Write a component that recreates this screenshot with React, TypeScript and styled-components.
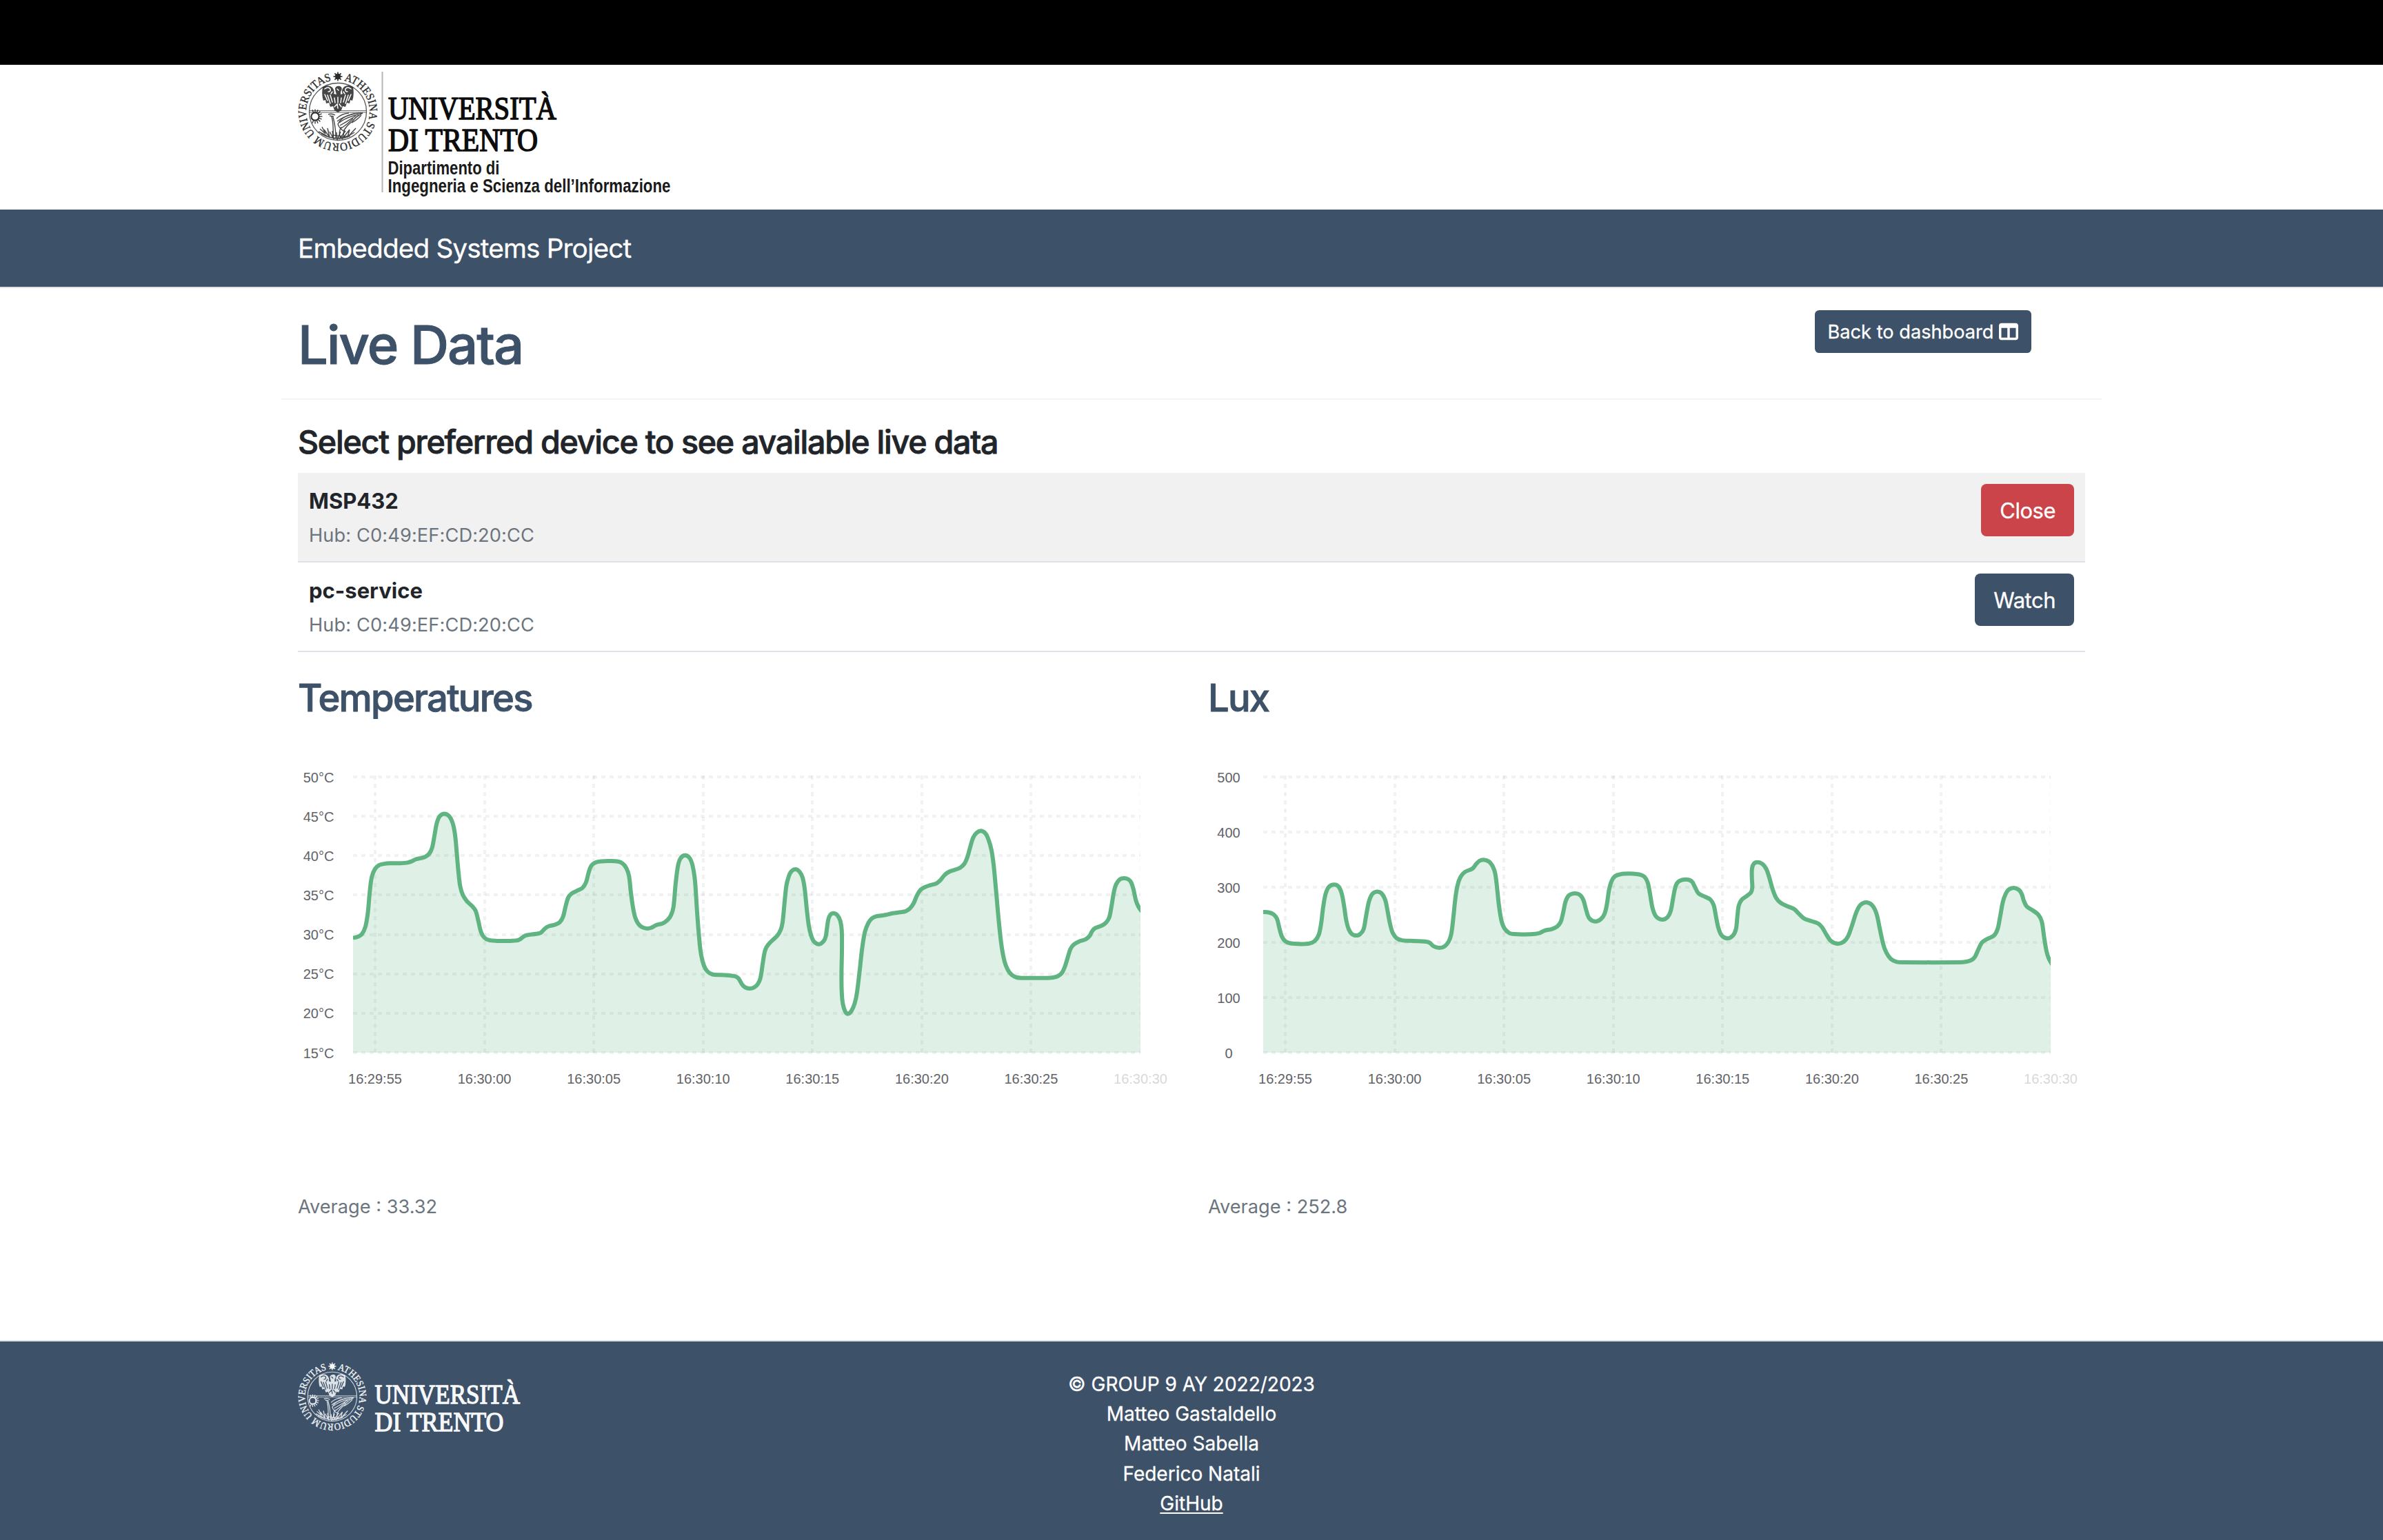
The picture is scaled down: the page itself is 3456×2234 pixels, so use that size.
import styled, { createGlobalStyle, css } from "styled-components";

const slate = "#3d5168";
const ink = "#212529";
const muted = "#6c757d";
const rule = "#dee2e6";
const green = "#5fb481";

const GlobalStyle = createGlobalStyle`
  * { box-sizing: border-box; }
  body {
    margin: 0;
    background: #fff;
    color: ${ink};
    font-family: Inter, "Noto Sans", sans-serif;
    font-size: 31px;
    line-height: 48px;
  }
  h1, h2, h3 { margin: 0; }
`;

const Page = styled.div`
  display: flex;
  flex-direction: column;
  height: 2234px;
`;

const TopStrip = styled.div`
  flex: none;
  height: 94px;
  background: #000;
`;

const Container = styled.div`
  width: 2640px;
  margin: 0 auto;
  padding: 0 24px;
`;

const Masthead = styled.header`
  flex: none;
  height: 210px;
  padding-top: 10px;
  svg { display: block; overflow: visible; }
`;

const Navbar = styled.nav`
  flex: none;
  display: flex;
  align-items: center;
  height: 114px;
  padding-top: 3px;
  background: ${slate};
  border-bottom: 2px solid ${rule};
`;

const Brand = styled.span`
  color: #fff;
  font-size: 38.8px;
  letter-spacing: -0.9px;
  -webkit-text-stroke: 0.3px #fff;
`;

const Main = styled.main`
  flex: 1;
`;

const TitleBar = styled(Container)`
  display: flex;
  justify-content: space-between;
  align-items: flex-start;
  height: 162px;
  padding: 32px 102px 0 24px;
  border-bottom: 2px solid #f3f4f7;
`;

const Title = styled.h1`
  padding-top: 2px;
  color: ${slate};
  font-size: 77.6px;
  font-weight: 500;
  line-height: 96px;
  letter-spacing: -1.95px;
  -webkit-text-stroke: 1px ${slate};
`;

const buttonTone = {
  primary: slate,
  danger: "#cb444a",
};

const Button = styled.button<{ $tone: "primary" | "danger"; $small?: boolean }>`
  display: flex;
  align-items: center;
  justify-content: center;
  border: 0;
  color: #fff;
  font-family: inherit;
  background: ${(p) => buttonTone[p.$tone]};
  ${(p) =>
    p.$small
      ? css`
          gap: 8px;
          width: 314px;
          height: 62px;
          border-radius: 6.4px;
          font-size: 27.2px;
          -webkit-text-stroke: 0.3px #fff;
        `
      : css`
          height: 76px;
          padding: 0 27px;
          border-radius: 8px;
          font-size: 31px;
          letter-spacing: -0.5px;
          -webkit-text-stroke: 0.3px #fff;
        `}
`;

const Devices = styled(Container)`
  padding-top: 32px;
`;

const DevicesHeading = styled.h2`
  margin-bottom: 16px;
  font-size: 46.6px;
  font-weight: 500;
  line-height: 58px;
  letter-spacing: -1.25px;
  -webkit-text-stroke: 0.8px ${ink};
`;

const DeviceRow = styled.div<{ $active?: boolean }>`
  display: flex;
  justify-content: space-between;
  align-items: flex-start;
  height: 130px;
  padding: 16px;
  background: ${(p) => (p.$active ? "#f1f1f1" : "#fff")};
  border-bottom: 2px solid ${rule};
`;

const DeviceName = styled.div`
  padding-top: 1px;
  font-size: 31px;
  font-weight: 700;
`;

const Small = styled.div`
  padding-top: 1px;
  color: ${muted};
  font-size: 27.2px;
  line-height: 42px;
`;

const HubLine = styled(Small)`
  margin-top: 4px;
  letter-spacing: 0.12px;
`;

const Charts = styled(Container)`
  display: grid;
  grid-template-columns: 1fr 1fr;
  column-gap: 48px;
  padding-top: 32px;
`;

const ChartTitle = styled.h3`
  color: ${slate};
  font-size: 54.3px;
  font-weight: 500;
  line-height: 68px;
  letter-spacing: -1.75px;
  -webkit-text-stroke: 0.9px ${slate};
`;

const Plot = styled.svg`
  display: block;
  margin-bottom: 83px;
  font-family: "Liberation Sans", Arial, sans-serif;
  font-size: 20px;
`;

const Footer = styled.footer`
  flex: none;
  height: 290px;
  color: #fff;
  background: ${slate};
  border-top: 2px solid ${rule};
`;

const FooterGrid = styled(Container)`
  display: grid;
  grid-template-columns: 1fr 1fr 1fr;
`;

const FooterLogo = styled.div`
  padding-top: 30px;
  svg { display: block; overflow: visible; }
`;

const Credits = styled.div`
  padding-top: 41px;
  font-size: 28px;
  line-height: 43.2px;
  text-align: center;
  -webkit-text-stroke: 0.3px #fff;
  a {
    color: inherit;
    text-decoration-thickness: 2px;
    text-underline-offset: 3px;
  }
`;

/* University seal, drawn in a 116 unit box. */
function Seal({ id, color, bg }: { id: string; color: string; bg: string }) {
  const rays = Array.from({ length: 16 }, (_, i) => (i * Math.PI) / 8);
  return (
    <g>
      <defs>
        <path id={id} d="M58 12 A46 46 0 0 1 58 104 A46 46 0 0 1 58 12" />
      </defs>
      <text
        fill={color}
        stroke={color}
        strokeWidth="0.35"
        fontFamily="'Liberation Serif', serif"
        fontSize="16.8"
      >
        <textPath href={`#${id}`} startOffset="9" textLength="270" lengthAdjust="spacingAndGlyphs">
          ATHESINA STUDIORUM UNIVERSITAS
        </textPath>
      </text>
      {[0, 1, 2, 3].map((i) => (
        <line
          key={i}
          x1="58"
          x2="58"
          y1="0.5"
          y2="13.5"
          stroke={color}
          strokeWidth="1.6"
          transform={`rotate(${i * 45} 58 7)`}
        />
      ))}
      <circle cx="58" cy="7" r="4.2" fill={color} />
      <circle cx="58" cy="58" r="41.5" fill="none" stroke={color} strokeWidth="1.3" opacity="0.8" />
      <path d="M17 56.6H99M17 59H99" stroke={color} strokeWidth="1" opacity="0.75" />
      {/* eagle */}
      <path
        d="M36 22 Q45 18 50 23 Q54 28 52 32 L56 33 Q54 27 54 24 Q56 20 61 21 Q66 23 62 29 L62 33 L65 32 Q62 27 67 22 Q73 18 80 22 Q82 34 79 42 L76 41 L75 46 L71 45 L69 51 L65 50 L63 56 L58 59 L53 56 L51 50 L47 51 L45 45 L41 46 L40 41 L37 42 Q34 34 36 22Z"
        fill={color}
        opacity="0.88"
      />
      <g stroke={bg} fill="none" strokeWidth="1.5" strokeLinecap="round">
        <path d="M39 25 Q44 21 47 25 Q48 29 44 29 M77 25 Q72 21 69 25 Q68 29 72 29" />
        <path d="M39 33 L43 42 M43 34 L47 46 M47 34 L50 44 M77 33 L73 42 M73 34 L69 46 M69 34 L66 44" />
        <path d="M53 38 L54 45 M58 37 V45 M63 38 L62 45 M53 51 L57 47 L58 53 M60 47 L63 51" />
        <path d="M50 29 L48 32 M66 29 L68 32 M57 25 L59 27" />
      </g>
      {/* sun */}
      <g stroke={color} strokeWidth="1.3">
        {rays.map((a) => (
          <line
            key={a}
            x1={25 + 6 * Math.cos(a)}
            y1={65 + 6 * Math.sin(a)}
            x2={25 + 10.5 * Math.cos(a)}
            y2={65 + 10.5 * Math.sin(a)}
            opacity={Math.cos(a) < -0.6 ? 0 : 1}
          />
        ))}
        <circle cx="25" cy="65" r="5.6" fill={bg} strokeWidth="2" />
      </g>
      {/* torch and wind-blown flame */}
      <g fill="none" stroke={color} strokeWidth="1.4" opacity="0.85">
        <path d="M44 62 Q49 60 54 63 M46 64 L52 65 M49 65 Q52 76 51 95 M51 66 Q55 80 55 96" />
        <path d="M58 76 Q66 60 94 60 Q84 65 79 72 Q72 77 66 86 Q60 82 58 76Z" />
        <path d="M60 74 Q70 66 88 62 M61 78 Q72 72 84 64 M63 82 Q72 76 80 68 M56 68 Q63 61 74 60 M57 72 Q66 65 82 61 M92 63 Q86 70 78 74" />
        <path d="M63 80 Q58 88 62 96 M68 85 Q64 90 68 95" />
      </g>
      {/* grass */}
      <g fill="none" stroke={color} strokeWidth="1.5" opacity="0.85">
        <path d="M32 83 L40 90 L35 80 M38 84 L46 95 L43 82 M46 87 L52 98 L50 86 M56 88 L57 99 L62 87 M60 98 L69 86 M64 98 L75 84 L72 95 M72 95 L84 82 M30 87 L42 93 M50 92 L66 94 M40 93 Q58 101 76 93 M34 90 Q58 104 82 88" />
      </g>
    </g>
  );
}

function Wordmark({
  x,
  color,
  rows,
  size,
}: {
  x: number;
  color: string;
  size: number;
  rows: { label: string; y: number; width: number }[];
}) {
  return (
    <g
      fill={color}
      stroke={color}
      strokeWidth={size / 30}
      fontFamily="'Liberation Serif', serif"
      fontSize={size}
    >
      {rows.map((r) => (
        <text key={r.label} x={x} y={r.y} textLength={r.width} lengthAdjust="spacingAndGlyphs">
          {r.label}
        </text>
      ))}
    </g>
  );
}

function DepartmentLogo() {
  return (
    <svg width="600" height="200" viewBox="0 0 600 200">
      <Seal id="seal-dark" color="#2b2b2b" bg="#fff" />
      <rect x="121.5" y="0" width="2" height="175" fill="#b5b5b5" />
      <Wordmark
        x={131}
        color="#0c0c0c"
        size={47}
        rows={[
          { label: "UNIVERSITÀ", y: 69.3, width: 244 },
          { label: "DI TRENTO", y: 115, width: 217 },
        ]}
      />
      <g fill="#1a1a1a" fontFamily="'Liberation Sans', Arial, sans-serif" fontWeight="700" fontSize="27">
        <text x="130.5" y="149.3" textLength="162" lengthAdjust="spacingAndGlyphs">
          Dipartimento di
        </text>
        <text x="130.5" y="175.3" textLength="410" lengthAdjust="spacingAndGlyphs">
          Ingegneria e Scienza dell’Informazione
        </text>
      </g>
    </svg>
  );
}

function UniversityLogo() {
  return (
    <svg width="360" height="120" viewBox="0 0 360 120">
      <g transform="scale(0.86)">
        <Seal id="seal-light" color="#f4f6f8" bg={slate} />
      </g>
      <Wordmark
        x={111.5}
        color="#f7f8fa"
        size={41}
        rows={[
          { label: "UNIVERSITÀ", y: 59.7, width: 210.5 },
          { label: "DI TRENTO", y: 99.5, width: 187 },
        ]}
      />
    </svg>
  );
}

function ColumnsIcon() {
  return (
    <svg width="28" height="28" viewBox="0 0 512 512" fill="#fff">
      <path
        fillRule="evenodd"
        d="M0 96C0 60.7 28.7 32 64 32H448c35.3 0 64 28.7 64 64V416c0 35.3-28.7 64-64 64H64c-35.3 0-64-28.7-64-64V96zm64 64V416H224V160H64zm384 0H288V416H448V160z"
      />
    </svg>
  );
}

type Point = [number, number];

interface Stretch {
  sx: number;
  sy: number;
  dx: number;
  dy: number;
  samples: Point[];
}

const temperature: Stretch[] = [
  {
    sx: 2.306, sy: 2.45, dx: -32, dy: -86,
    samples: [[258,982],[275,977],[288,968],[300,940],[308,890],[314,820],[321,765],[332,736],[345,723],[362,718],[385,716],[415,716],[440,714],[455,709],[468,702],[485,698],[500,693],[513,682],[523,660],[531,615],[538,575],[548,549],[564,540],[580,549],[592,575],[600,620],[606,690],[611,750],[617,800],[626,830],[640,852],[656,868],[668,885],[677,920],[686,960],[697,980],[712,989],[740,992],[785,992],[812,989],[828,977],[838,972],[870,967],[886,963],[900,948],[912,940],[935,934],[950,925],[961,905],[969,870],[978,838],[988,825],[1005,815],[1025,804],[1037,785],[1046,750],[1055,725],[1070,713],[1090,709],[1115,708],[1145,710],[1160,717],[1172,733],[1181,760],[1187,815],[1194,870],[1203,912],[1218,938],[1240,948],[1256,945],[1272,936],[1295,929],[1310,918],[1322,900],[1330,870],[1337,790],[1345,725],[1354,698],[1369,688],[1384,698],[1394,725],[1402,780],[1409,890],[1416,985],[1423,1045],[1432,1080],[1443,1100],[1460,1111],[1490,1113]],
  },
  {
    sx: 2.376, sy: 3, dx: 628, dy: 34,
    samples: [[0,1006],[15,1009],[26,1018],[38,1043],[48,1056],[64,1062],[80,1057],[93,1042],[102,1015],[110,950],[118,895],[128,872],[145,850],[160,832],[172,805],[178,775],[184,700],[191,615],[199,575],[208,553],[222,543],[236,553],[247,580],[254,625],[261,710],[268,785],[276,830],[286,857],[304,869],[320,855],[327,835],[331,800],[336,760],[343,740],[354,734],[367,743],[377,768],[382,810],[382.5,900],[381,1000],[382,1080],[386,1130],[394,1162],[403,1172],[415,1160],[427,1125],[435,1075],[444,980],[453,880],[462,815],[474,776],[486,757],[500,748],[532,742],[558,734],[585,730],[603,725],[618,712],[630,690],[642,655],[654,632],[668,621],[685,613],[706,606],[720,593],[735,570],[750,555],[770,546],[790,536],[805,518],[815,490],[825,445],[835,405],[847,384],[862,376],[877,387],[888,415],[898,460],[905,520],[914,640],[924,780],[933,880],[943,945],[954,980],[968,1003],[985,1014],[1005,1016],[1090,1016],[1110,1014],[1127,1008],[1140,995],[1150,970],[1160,930],[1170,890],[1182,870],[1200,857],[1222,848],[1236,833],[1245,812],[1255,799],[1280,787],[1294,773],[1304,752],[1312,700],[1320,640],[1328,607],[1340,587],[1355,582],[1370,587],[1380,602],[1388,635],[1396,680],[1404,705],[1416,727]],
  },
];

const lux: Stretch[] = [
  {
    sx: 2.306, sy: 2.45, dx: -22, dy: -86,
    samples: [[233,889],[255,891],[270,898],[281,913],[289,945],[297,975],[308,992],[325,1000],[362,1003],[390,1001],[408,992],[421,970],[429,930],[436,870],[444,825],[455,800],[473,792],[488,800],[498,825],[506,870],[513,920],[521,950],[531,967],[546,973],[560,967],[571,950],[579,905],[588,855],[597,830],[606,820],[618,817],[631,823],[643,845],[651,885],[659,930],[668,963],[681,982],[700,990],[740,992],[775,994],[791,998],[805,1011],[824,1017],[842,1011],[855,995],[864,968],[871,910],[878,840],[885,795],[895,765],[910,747],[935,735],[948,718],[958,708],[972,704],[990,710],[1003,728],[1011,752],[1017,800],[1024,870],[1032,920],[1042,948],[1058,964],[1075,968],[1110,969],[1145,967],[1160,964],[1177,955],[1200,950],[1218,941],[1230,925],[1238,893],[1247,850],[1258,830],[1278,823],[1297,831],[1307,850],[1316,885],[1326,912],[1346,923],[1365,914],[1377,895],[1384,865],[1392,810],[1400,780],[1412,762],[1430,755],[1460,753],[1485,754.5]],
  },
  {
    sx: 2.306, sy: 3, dx: 628, dy: 34,
    samples: [[0,568],[12,577],[22,600],[30,650],[38,710],[50,748],[71,762],[88,752],[99,725],[107,670],[116,615],[127,595],[150,587],[169,595],[180,620],[192,648],[215,663],[232,675],[243,700],[250,745],[259,800],[270,832],[289,844],[307,832],[317,805],[322,750],[327,700],[337,675],[355,658],[368,643],[372,620],[370.5,580],[371,540],[377,519],[390,512],[406,520],[418,540],[428,575],[440,630],[452,668],[468,690],[490,704],[512,716],[528,737],[545,757],[570,769],[592,779],[605,795],[620,828],[635,855],[657,867],[677,859],[692,835],[706,785],[720,730],[734,698],[754,687],[773,700],[787,735],[798,800],[810,870],[820,905],[835,933],[855,946],[880,948],[1065,948],[1085,946],[1102,940],[1115,927],[1127,895],[1140,862],[1158,846],[1180,832],[1192,805],[1200,755],[1210,685],[1220,648],[1230,631],[1247,624],[1264,633],[1273,650],[1280,680],[1290,705],[1310,722],[1328,740],[1340,770],[1348,840],[1356,900],[1363,930],[1376,960]],
  },
];

const toPoints = (stretches: Stretch[]): Point[] =>
  stretches.flatMap((s) =>
    s.samples.map(([x, y]): Point => [x / s.sx + s.dx, y / s.sy + s.dy]),
  );

/* Catmull-Rom spline through the points, written as cubic curves. */
function smoothPath(points: Point[]): string {
  const f = (n: number) => n.toFixed(1);
  let d = `M${f(points[0][0])} ${f(points[0][1])}`;
  for (let i = 0; i < points.length - 1; i++) {
    const p0 = points[i - 1] ?? points[i];
    const p1 = points[i];
    const p2 = points[i + 1];
    const p3 = points[i + 2] ?? p2;
    const span = Math.hypot(p2[0] - p1[0], p2[1] - p1[1]);
    const k1 = span / (span + Math.hypot(p1[0] - p0[0], p1[1] - p0[1]));
    const k2 = span / (span + Math.hypot(p3[0] - p2[0], p3[1] - p2[1]));
    d += `C${f(p1[0] + ((p2[0] - p0[0]) * k1) / 3)} ${f(p1[1] + ((p2[1] - p0[1]) * k1) / 3)} ${f(
      p2[0] - ((p3[0] - p1[0]) * k2) / 3,
    )} ${f(p2[1] - ((p3[1] - p1[1]) * k2) / 3)} ${f(p2[0])} ${f(p2[1])}`;
  }
  return d;
}

const times = [
  "16:29:55", "16:30:00", "16:30:05", "16:30:10",
  "16:30:15", "16:30:20", "16:30:25", "16:30:30",
];

const LEFT = 80;
const RIGHT = 1222;
const TOP = 81;
const BOTTOM = 481;

function AreaChart({ id, ticks, stretches }: { id: string; ticks: string[]; stretches: Stretch[] }) {
  const line = smoothPath(toPoints(stretches));
  const step = (BOTTOM - TOP) / (ticks.length - 1);
  return (
    <Plot width="1272" height="600" viewBox="0 0 1272 600">
      <defs>
        <clipPath id={id}>
          <rect x={LEFT} y={TOP - 3} width={RIGHT - LEFT} height={BOTTOM - TOP + 6} />
        </clipPath>
        <clipPath id={`${id}-area`}>
          <rect x={LEFT} y={TOP} width={RIGHT - LEFT} height={BOTTOM - TOP} />
        </clipPath>
      </defs>
      <g clipPath={`url(#${id})`} stroke="#000" strokeOpacity="0.05" strokeWidth="4" strokeDasharray="6 6">
        {ticks.map((t, i) => {
          const y = Math.round(TOP + i * step);
          return <line key={t} x1={LEFT} x2={RIGHT} y1={y} y2={y} />;
        })}
        {times.map((t, i) => {
          const x = Math.round(112 + (i * 1110) / 7);
          return (
            <line
              key={t}
              x1={x}
              x2={x}
              y1={TOP - 2}
              y2={BOTTOM}
              strokeOpacity={i === times.length - 1 ? 0.015 : 0.05}
            />
          );
        })}
      </g>
      <g clipPath={`url(#${id}-area)`}>
        <path d={`${line}V${BOTTOM}H${LEFT}Z`} fill={green} fillOpacity="0.2" />
        <path d={line} fill="none" stroke={green} strokeWidth="6" strokeLinejoin="round" />
      </g>
      <g fill="#626368" textAnchor="middle">
        {ticks.map((t, i) => (
          <text key={t} x="30" y={TOP + i * step + 7.5}>
            {t}
          </text>
        ))}
        {times.map((t, i) => (
          <text
            key={t}
            x={112 + (i * 1110) / 7}
            y="525.5"
            fillOpacity={i === times.length - 1 ? 0.27 : 1}
          >
            {t}
          </text>
        ))}
      </g>
    </Plot>
  );
}

const devices = [
  { name: "MSP432", hub: "C0:49:EF:CD:20:CC", open: true },
  { name: "pc-service", hub: "C0:49:EF:CD:20:CC", open: false },
];

export default function App() {
  return (
    <>
      <GlobalStyle />
      <Page>
        <TopStrip />
        <Masthead>
          <Container>
            <DepartmentLogo />
          </Container>
        </Masthead>
        <Navbar>
          <Container>
            <Brand>Embedded Systems Project</Brand>
          </Container>
        </Navbar>
        <Main>
          <TitleBar>
            <Title>Live Data</Title>
            <Button $tone="primary" $small>
              Back to dashboard
              <ColumnsIcon />
            </Button>
          </TitleBar>
          <Devices>
            <DevicesHeading>Select preferred device to see available live data</DevicesHeading>
            {devices.map((d) => (
              <DeviceRow key={d.name} $active={d.open}>
                <div>
                  <DeviceName>{d.name}</DeviceName>
                  <HubLine>Hub: {d.hub}</HubLine>
                </div>
                <Button $tone={d.open ? "danger" : "primary"}>{d.open ? "Close" : "Watch"}</Button>
              </DeviceRow>
            ))}
          </Devices>
          <Charts>
            <section>
              <ChartTitle>Temperatures</ChartTitle>
              <AreaChart
                id="plot-temperature"
                ticks={["50°C", "45°C", "40°C", "35°C", "30°C", "25°C", "20°C", "15°C"]}
                stretches={temperature}
              />
              <Small>Average : 33.32</Small>
            </section>
            <section>
              <ChartTitle>Lux</ChartTitle>
              <AreaChart id="plot-lux" ticks={["500", "400", "300", "200", "100", "0"]} stretches={lux} />
              <Small>Average : 252.8</Small>
            </section>
          </Charts>
        </Main>
        <Footer>
          <FooterGrid>
            <FooterLogo>
              <UniversityLogo />
            </FooterLogo>
            <Credits>
              <div>© GROUP 9 AY 2022/2023</div>
              <div>Matteo Gastaldello</div>
              <div>Matteo Sabella</div>
              <div>Federico Natali</div>
              <a href="#github">GitHub</a>
            </Credits>
          </FooterGrid>
        </Footer>
      </Page>
    </>
  );
}
